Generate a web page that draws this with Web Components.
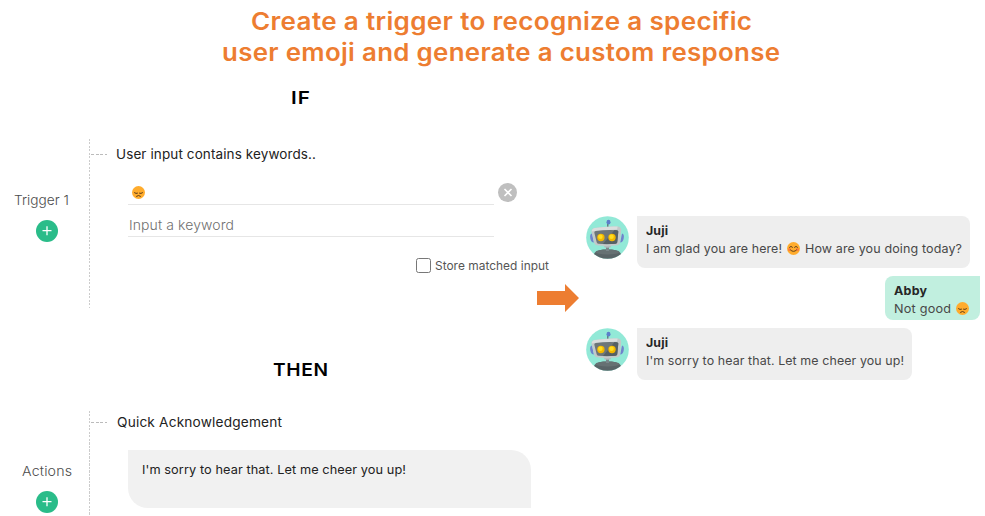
<!DOCTYPE html>
<html lang="en">
<head>
<meta charset="utf-8">
<title>Emoji trigger</title>
<style>
html,body{margin:0;padding:0;background:#fff}
body{width:985px;height:516px;overflow:hidden;font-family:Inter,"Open Sans","Liberation Sans",sans-serif}
</style>
</head>
<body>
<trigger-page></trigger-page>
<script>
const define = (name, html, ready) => customElements.define(name, class extends HTMLElement {
  connectedCallback() {
    if (this.shadowRoot) return;
    this.attachShadow({ mode: 'open' }).innerHTML = html;
    if (ready) ready.call(this, this.shadowRoot);
  }
});

/* A single line of text, widened and tracked so that it fills the given width. */
define('fit-text', `<style>
  :host{display:block;white-space:nowrap;line-height:20px}
  span{display:inline-block;white-space:pre;transform-origin:0 50%}
</style><span></span>`, function (root) {
  const span = root.querySelector('span');
  const text = this.getAttribute('text');
  const width = Number(this.getAttribute('w'));
  span.textContent = text;
  const natural = span.getBoundingClientRect().width;
  const scale = 1 + (width / natural - 1) * 0.7;
  span.style.letterSpacing = ((width / scale - natural) / (text.length - 1)) + 'px';
  span.style.transform = 'scaleX(' + scale + ')';
  this.style.width = width + 'px';
});

define('emoji-face', `<style>:host{display:block;width:13px;height:13px;flex:none}svg{display:block;width:100%;height:100%}
  .happy{display:none}:host([mood=happy]) .happy{display:block}:host([mood=happy]) .sad{display:none}</style>
  <svg viewBox="0 0 26 26" fill="none" stroke-linecap="round">
    <circle cx="13" cy="13" r="13" fill="#ffac2d"/>
    <g class="sad" stroke="#5a3a1a" stroke-width="2"><path d="M5 13.500q3 2.500 6 1M15 14.500q3 1.500 6-1M9 20.500q4-3.500 8 0"/></g>
    <g class="happy"><circle cx="5" cy="15" r="3" fill="#ff7a38"/><circle cx="21" cy="15" r="3" fill="#ff7a38"/>
    <path d="M5 10.500q3-4 6 0M15 10.500q3-4 6 0M7 16q6 6 12 0" stroke="#61401c" stroke-width="2"/></g>
  </svg>`);

define('add-button', `<style>:host{display:block;width:22px;height:22px}svg{display:block}</style>
  <svg width="22" height="22" viewBox="0 0 22 22"><circle cx="11" cy="11" r="11" fill="#2abc89"/><path d="M6.500 10.700h9M11 6.200v9" stroke="#fff" stroke-width="1.300"/></svg>`);

define('clear-button', `<style>:host{display:block;width:19px;height:19px}svg{display:block}</style>
  <svg width="19" height="19" viewBox="0 0 19 19"><circle cx="9.500" cy="9.500" r="9.500" fill="#bfbfbf"/><path d="M6.500 6l7 7M13.500 6l-7 7" stroke="#fff" stroke-width="1.600"/></svg>`);

define('robot-avatar', `<style>:host{display:block;width:43px;height:43px;flex:none}svg{display:block}</style>
  <svg width="43" height="43" viewBox="0 0 43 43">
    <defs><clipPath id="c"><circle cx="21.500" cy="21.500" r="21.300"/></clipPath></defs>
    <circle cx="21.500" cy="21.500" r="21.300" fill="#92e9d7"/>
    <g clip-path="url(#c)">
      <path d="M21.800 12V7" stroke="#59666d" stroke-width="1.200"/>
      <ellipse cx="22.500" cy="6.200" rx="2" ry="2.400" fill="#5c7ec9"/>
      <path d="M6 17.500q-2.500.5-1.700 5 .8 4 3.500 4zM36 17.500q2.500.5 1.700 5-.8 4-3.500 4z" fill="#6f83cc"/>
      <path d="M8 43v-5q1-3.500 9-4.500h9q8 1 9 4.500v5z" fill="#596467"/>
      <ellipse cx="21.500" cy="36" rx="12" ry="2.500" fill="#667173"/>
      <path d="M21.500 29v6" stroke="#79868a" stroke-width="3"/>
      <ellipse cx="21.500" cy="30.500" rx="3.500" ry="1.200" fill="#b5bcbe"/>
      <path d="M5.500 15.500q-.2-3 3-3.500 12-2 23-1.500 4 .3 3.700 4L34 26.500q-.3 2.500-2.500 2.800-10.500 1.500-20.500 0-2.300-.3-2.800-2.500z" fill="#c3c8c9"/>
      <path d="M5.700 15.500q0-3 3-3.500 12-2 23-1.500L31 13.500 8.500 15z" fill="#dadddd"/>
      <path d="M8.300 16.500q0-1.300 1.500-1.500 10.500-1.600 21-.8 1.700.1 1.500 2l-1 9.800q-.2 1.500-1.700 1.700-8.800.9-17.300 0-1.500-.2-1.700-1.700z" fill="#6d7679"/>
      <path d="M28.500 14.100q2.500 0 3.800.8l-1.100 11.300q-.2 1.300-1.700 1.500-7 .7-12.500.2z" fill="#566064"/>
      <circle cx="14.900" cy="21.500" r="3.700" fill="#f1b600"/><circle cx="26" cy="21.500" r="3.700" fill="#f1b600"/>
      <circle cx="14.400" cy="20.700" r="2.300" fill="#ffdc21"/><circle cx="25.500" cy="20.700" r="2.300" fill="#ffdc21"/>
    </g>
  </svg>`);

define('block-arrow', `<style>:host{display:block;width:42px;height:28px}svg{display:block}</style>
  <svg width="42" height="28" viewBox="0 0 42 28"><path d="M0 7h28V0l14 14-14 14v-7H0z" fill="#ed7d31"/></svg>`);

define('rule-group', `<style>
  :host{display:grid;grid-template-columns:89px 1fr}
  .side{padding-top:var(--side,51px);display:flex;flex-direction:column}
  .label{margin-left:var(--label-left,14px);font-size:13.500px;color:#4c4c4c;font-weight:300;height:20px}
  add-button{margin:var(--add-gap,10px) 0 0 36px}
  .body{display:grid;grid-template-columns:2px 1fr}
  .line{background:repeating-linear-gradient(#ccc 0 2px,transparent 2px 3.500px) 0 0/1px 100% no-repeat}
  .head{display:flex;align-items:center;gap:var(--head-gap,9px);height:20px;padding-top:var(--head,5px);font-size:13px;color:#222}
  .head i{width:16px;height:1px;background:repeating-linear-gradient(90deg,#bbb 0 3px,transparent 3px 4.500px)}
</style>
<div class="side"><div class="label"><slot name="label"></slot></div><add-button></add-button></div>
<div class="body"><div class="line"></div><div><div class="head"><i></i><slot name="title"></slot></div><slot></slot></div></div>`);

define('keyword-form', `<style>
  :host{display:block;margin:19px 0 0 37px}
  .row{display:grid;grid-template-columns:366px 19px;column-gap:4px}
  .field{box-sizing:border-box;border-bottom:1px solid #e6e6e6;display:flex;padding-left:4px}
  .first{height:22px;padding-top:3px}
  .second{height:32px;padding:10px 0 0 1px;font-size:13.500px;font-weight:300;color:#707070}
  .check{display:flex;gap:4px;margin:18px 0 0 288px;font-size:11.800px;color:#555;align-items:center}
  .check fit-text{padding-top:1px}
  .box{box-sizing:border-box;width:15px;height:15px;border:1px solid #777;border-radius:2.500px}
</style>
<div class="row"><div class="field first"><emoji-face></emoji-face></div><clear-button></clear-button></div>
<div class="row"><div class="field second"><fit-text text="Input a keyword" w="105"></fit-text></div></div>
<div class="check"><div class="box"></div><fit-text text="Store matched input" w="114"></fit-text></div>`);

define('reply-box', `<style>
  :host{display:block;box-sizing:border-box;width:403px;height:58px;margin:18px 0 0 37px;padding:10px 0 0 14px;background:#f1f1f1;border-radius:0 20px 0 20px;font-size:12.300px;color:#222}
</style><slot></slot>`);

define('chat-message', `<style>
  :host{display:flex;gap:8px;align-items:flex-start}
  .bubble{box-sizing:border-box;width:var(--w);height:52px;padding:5px 0 0 9px;background:#eee;border-radius:0 8px 8px 8px;color:#484848;font-size:11.900px}
  .name{height:18px;font-weight:700;color:#262626;font-size:11.800px}
  .text{display:flex;align-items:center;height:19px}
  :host([mine]){margin-left:299px}
  :host([mine]) .bubble{height:44px;background:#c1efdf;border-radius:8px 0 8px 8px}
  :host([mine]) robot-avatar{display:none}
</style><robot-avatar></robot-avatar><div class="bubble"><div class="name"><slot name="name"></slot></div><div class="text"><slot></slot></div></div>`);

define('trigger-page', `<style>
  :host{display:grid;grid-template-rows:67px 1fr;width:985px;height:516px}
  header{padding-top:6px;box-sizing:border-box;display:flex;flex-direction:column;align-items:center;font-size:24.300px;font-weight:600;color:#ed7d31;padding-left:17px}
  header fit-text{line-height:31px}
  main{display:grid;grid-template-columns:537px 42px 1fr}
  h2{margin:0;font-size:17.500px;font-weight:600;color:#000;height:20px}
  .if{padding:21px 0 0 291px}.then{padding:52px 0 0 273px}
  .g1{height:169px;margin-top:31px}
  .g2{height:105px;margin-top:31px;--side:50px;--label-left:22px;--head:1px;--head-gap:10px}
  block-arrow{margin-top:217px}
  .chat{padding:149px 0 0 7px;display:flex;flex-direction:column;gap:8px}
  .face{margin:0 5px}
</style>
<header><fit-text text="Create a trigger to recognize a specific" w="501"></fit-text><fit-text text="user emoji and generate a custom response" w="558"></fit-text></header>
<main>
  <section>
    <h2 class="if"><fit-text text="IF" w="19"></fit-text></h2>
    <rule-group class="g1">
      <fit-text slot="label" text="Trigger 1" w="55"></fit-text>
      <fit-text slot="title" text="User input contains keywords.." w="200"></fit-text>
      <keyword-form></keyword-form>
    </rule-group>
    <h2 class="then"><fit-text text="THEN" w="55"></fit-text></h2>
    <rule-group class="g2">
      <fit-text slot="label" text="Actions" w="50"></fit-text>
      <fit-text slot="title" text="Quick Acknowledgement" w="165"></fit-text>
      <reply-box><fit-text text="I'm sorry to hear that. Let me cheer you up!" w="264"></fit-text></reply-box>
    </rule-group>
  </section>
  <block-arrow></block-arrow>
  <section class="chat">
    <chat-message style="--w:333px"><fit-text slot="name" text="Juji" w="22"></fit-text>
      <fit-text text="I am glad you are here!" w="136"></fit-text><emoji-face class="face" mood="happy"></emoji-face><fit-text text="How are you doing today?" w="157"></fit-text></chat-message>
    <chat-message mine style="--w:95px"><fit-text slot="name" text="Abby" w="33"></fit-text>
      <fit-text text="Not good" w="57"></fit-text><emoji-face class="face"></emoji-face></chat-message>
    <chat-message style="--w:275px"><fit-text slot="name" text="Juji" w="22"></fit-text>
      <fit-text text="I'm sorry to hear that. Let me cheer you up!" w="258"></fit-text></chat-message>
  </section>
</main>`);
</script>
</body>
</html>
